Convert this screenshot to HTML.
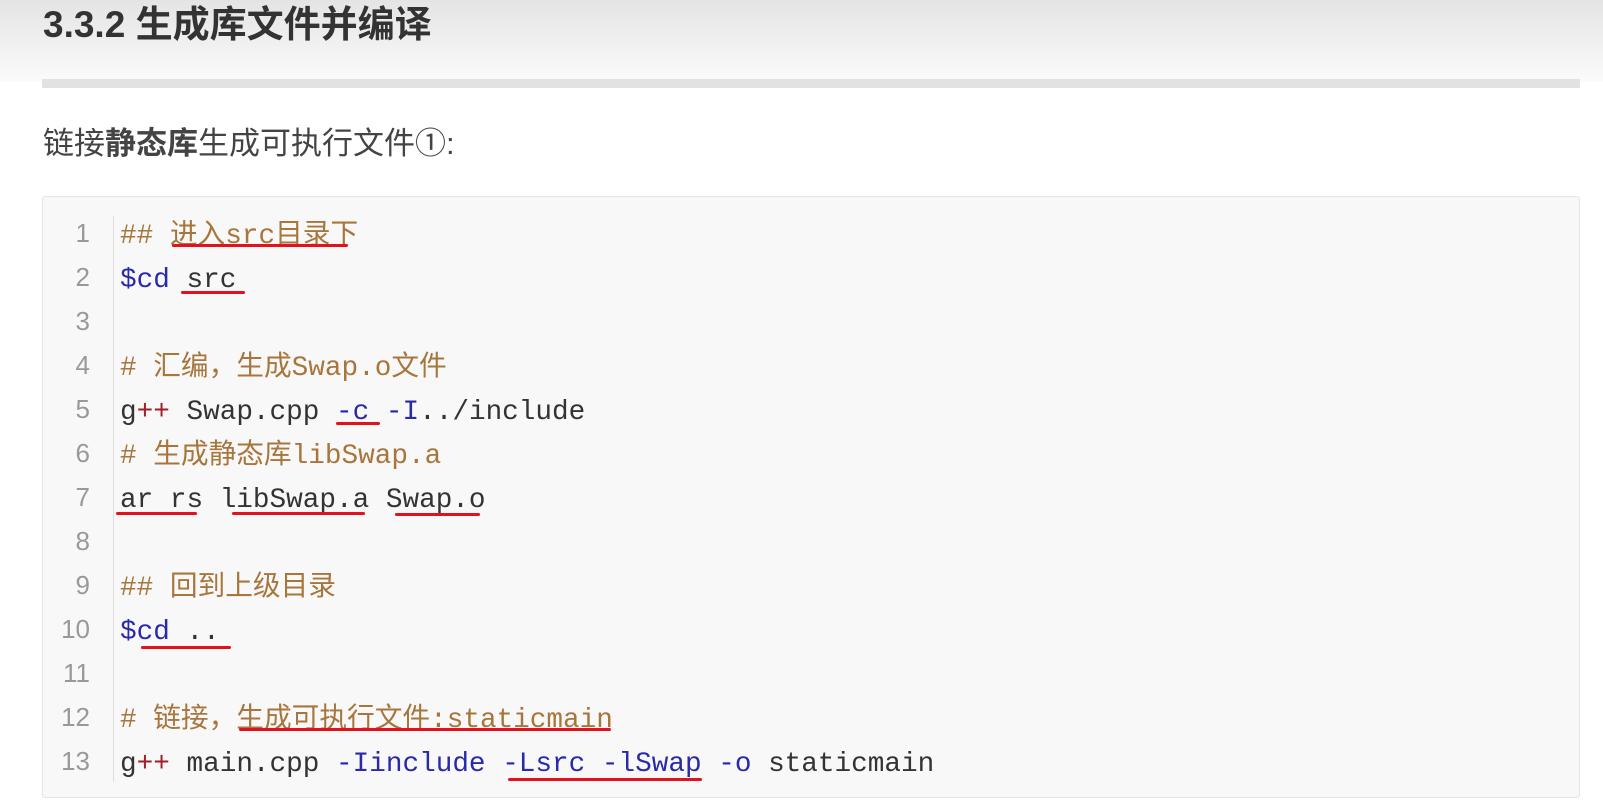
<!DOCTYPE html>
<html><head><meta charset="utf-8"><style>
body{margin:0;width:1603px;height:812px;background:#fff;position:relative;overflow:hidden;font-family:"Liberation Sans","Noto Sans CJK SC",sans-serif;}
.top{position:absolute;left:0;top:0;width:1603px;height:82px;background:linear-gradient(#e4e4e4,#fbfbfb);}
h1{position:absolute;left:43px;top:2px;margin:0;font-size:37px;line-height:46px;color:#333;font-weight:bold;}
.bar{position:absolute;left:42px;top:79px;width:1538px;height:9px;background:#e2e2e2;}
p{position:absolute;left:43px;top:121px;margin:0;font-size:31px;line-height:46px;color:#444;}
.code{position:absolute;left:42px;top:196px;width:1536px;height:600px;background:#f8f8f8;border:1px solid #e4e4e4;border-radius:3px;}
.sep{position:absolute;left:113px;top:216px;width:1px;height:566px;background:#ddd;}
.ln{position:absolute;left:40px;width:50px;text-align:right;font-family:"Liberation Sans",sans-serif;font-size:26px;color:#999;line-height:44px;margin-top:-2px;}
.cl{position:absolute;left:120px;font-family:"Liberation Mono","Noto Sans CJK SC",monospace;font-size:27.7px;line-height:44px;color:#333;white-space:pre;margin-top:2px;}
.c{color:#a8763c}.b{color:#2a2aa8}.r{color:#a0202a}
.u{position:absolute;height:3px;background:#e3101e;border-radius:2px;}
</style></head><body>
<div class="top"></div>
<h1>3.3.2 生成库文件并编译</h1>
<div class="bar"></div>
<p>链接<b>静态库</b>生成可执行文件①:</p>
<div class="code"></div>
<div class="sep"></div>
<div class="ln" style="top:213px">1</div><div class="cl c" style="top:213px">## 进入src目录下</div>
<div class="ln" style="top:257px">2</div><div class="cl" style="top:257px"><span class="b">$cd</span> src</div>
<div class="ln" style="top:301px">3</div>
<div class="ln" style="top:345px">4</div><div class="cl c" style="top:345px"># 汇编，生成Swap.o文件</div>
<div class="ln" style="top:389px">5</div><div class="cl" style="top:389px">g<span class="r">++</span> Swap.cpp <span class="b">-c</span> <span class="b">-I</span>../include</div>
<div class="ln" style="top:433px">6</div><div class="cl c" style="top:433px"># 生成静态库libSwap.a</div>
<div class="ln" style="top:477px">7</div><div class="cl" style="top:477px">ar rs libSwap.a Swap.o</div>
<div class="ln" style="top:521px">8</div>
<div class="ln" style="top:565px">9</div><div class="cl c" style="top:565px">## 回到上级目录</div>
<div class="ln" style="top:609px">10</div><div class="cl" style="top:609px"><span class="b">$cd</span> ..</div>
<div class="ln" style="top:653px">11</div>
<div class="ln" style="top:697px">12</div><div class="cl c" style="top:697px"># 链接，生成可执行文件:staticmain</div>
<div class="ln" style="top:741px">13</div><div class="cl" style="top:741px">g<span class="r">++</span> main.cpp <span class="b">-Iinclude</span> <span class="b">-Lsrc</span> <span class="b">-lSwap</span> <span class="b">-o</span> staticmain</div>
<div class="u" style="left:172px;top:244px;width:176px"></div>
<div class="u" style="left:181px;top:291px;width:64px"></div>
<div class="u" style="left:336px;top:422px;width:44px"></div>
<div class="u" style="left:116px;top:512px;width:81px"></div>
<div class="u" style="left:232px;top:512px;width:133px"></div>
<div class="u" style="left:395px;top:513px;width:85px"></div>
<div class="u" style="left:141px;top:646px;width:90px"></div>
<div class="u" style="left:239px;top:728px;width:372px"></div>
<div class="u" style="left:508px;top:778px;width:194px"></div>
</body></html>
